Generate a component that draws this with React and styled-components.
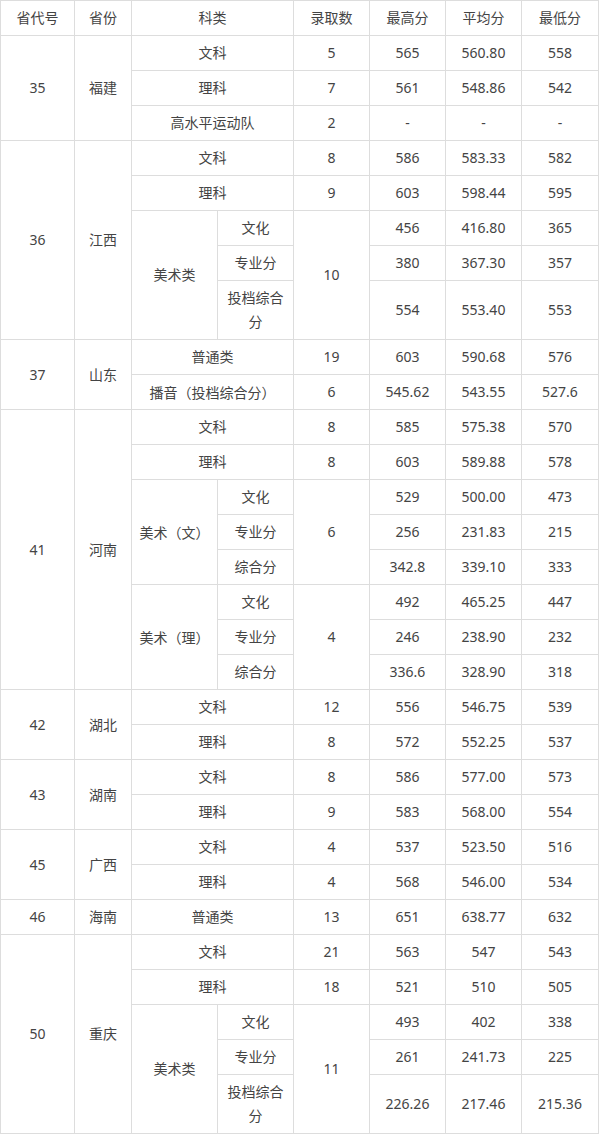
import React from "react";
import styled, { createGlobalStyle } from "styled-components";

const GlobalStyle = createGlobalStyle`
  body {
    margin: 0;
    background: #fff;
    font-family: "Noto Sans", "Noto Sans CJK SC", sans-serif;
  }
`;

const Table = styled.table`
  width: 599px;
  border-collapse: collapse;
  table-layout: fixed;
  color: #444;
  font-size: 14px;
`;

const Cell = styled.td`
  border: 1px solid #ddd;
  padding: 5px 4px;
  line-height: 24px;
  text-align: center;
  vertical-align: middle;
  font-weight: normal;
  word-break: break-all;
  font-family: ${(p) => (p.$cjk ? '"Noto Sans CJK SC", sans-serif' : "inherit")};
`;

const widths = [74, 57, 86, 76, 76, 76, 76, 77];

// each cell: [text, rowSpan, colSpan]
const header = [["省代号"], ["省份"], ["科类", 1, 2], ["录取数"], ["最高分"], ["平均分"], ["最低分"]];

const rows = [
  [["35", 3], ["福建", 3], ["文科", 1, 2], ["5"], ["565"], ["560.80"], ["558"]],
  [["理科", 1, 2], ["7"], ["561"], ["548.86"], ["542"]],
  [["高水平运动队", 1, 2], ["2"], ["-"], ["-"], ["-"]],

  [["36", 5], ["江西", 5], ["文科", 1, 2], ["8"], ["586"], ["583.33"], ["582"]],
  [["理科", 1, 2], ["9"], ["603"], ["598.44"], ["595"]],
  [["美术类", 3], ["文化"], ["10", 3], ["456"], ["416.80"], ["365"]],
  [["专业分"], ["380"], ["367.30"], ["357"]],
  [["投档综合分"], ["554"], ["553.40"], ["553"]],

  [["37", 2], ["山东", 2], ["普通类", 1, 2], ["19"], ["603"], ["590.68"], ["576"]],
  [["播音（投档综合分）", 1, 2], ["6"], ["545.62"], ["543.55"], ["527.6"]],

  [["41", 8], ["河南", 8], ["文科", 1, 2], ["8"], ["585"], ["575.38"], ["570"]],
  [["理科", 1, 2], ["8"], ["603"], ["589.88"], ["578"]],
  [["美术（文）", 3], ["文化"], ["6", 3], ["529"], ["500.00"], ["473"]],
  [["专业分"], ["256"], ["231.83"], ["215"]],
  [["综合分"], ["342.8"], ["339.10"], ["333"]],
  [["美术（理）", 3], ["文化"], ["4", 3], ["492"], ["465.25"], ["447"]],
  [["专业分"], ["246"], ["238.90"], ["232"]],
  [["综合分"], ["336.6"], ["328.90"], ["318"]],

  [["42", 2], ["湖北", 2], ["文科", 1, 2], ["12"], ["556"], ["546.75"], ["539"]],
  [["理科", 1, 2], ["8"], ["572"], ["552.25"], ["537"]],

  [["43", 2], ["湖南", 2], ["文科", 1, 2], ["8"], ["586"], ["577.00"], ["573"]],
  [["理科", 1, 2], ["9"], ["583"], ["568.00"], ["554"]],

  [["45", 2], ["广西", 2], ["文科", 1, 2], ["4"], ["537"], ["523.50"], ["516"]],
  [["理科", 1, 2], ["4"], ["568"], ["546.00"], ["534"]],

  [["46"], ["海南"], ["普通类", 1, 2], ["13"], ["651"], ["638.77"], ["632"]],

  [["50", 5], ["重庆", 5], ["文科", 1, 2], ["21"], ["563"], ["547"], ["543"]],
  [["理科", 1, 2], ["18"], ["521"], ["510"], ["505"]],
  [["美术类", 3], ["文化"], ["11", 3], ["493"], ["402"], ["338"]],
  [["专业分"], ["261"], ["241.73"], ["225"]],
  [["投档综合分"], ["226.26"], ["217.46"], ["215.36"]],
];

const renderRow = (cells, key, as) => (
  <tr key={key}>
    {cells.map(([text, rs = 1, cs = 1], i) => (
      <Cell
        key={i}
        as={as}
        rowSpan={rs}
        colSpan={cs}
        $cjk={text.includes("（")}
      >
        {text}
      </Cell>
    ))}
  </tr>
);

const App = () => {
  return (
    <>
      <GlobalStyle />
      <Table lang="zh-CN">
        <colgroup>
          {widths.map((w, i) => (
            <col key={i} style={{ width: w }} />
          ))}
        </colgroup>
        <thead>{renderRow(header, "h", "th")}</thead>
        <tbody>{rows.map((r, i) => renderRow(r, i))}</tbody>
      </Table>
    </>
  );
};

export default App;
